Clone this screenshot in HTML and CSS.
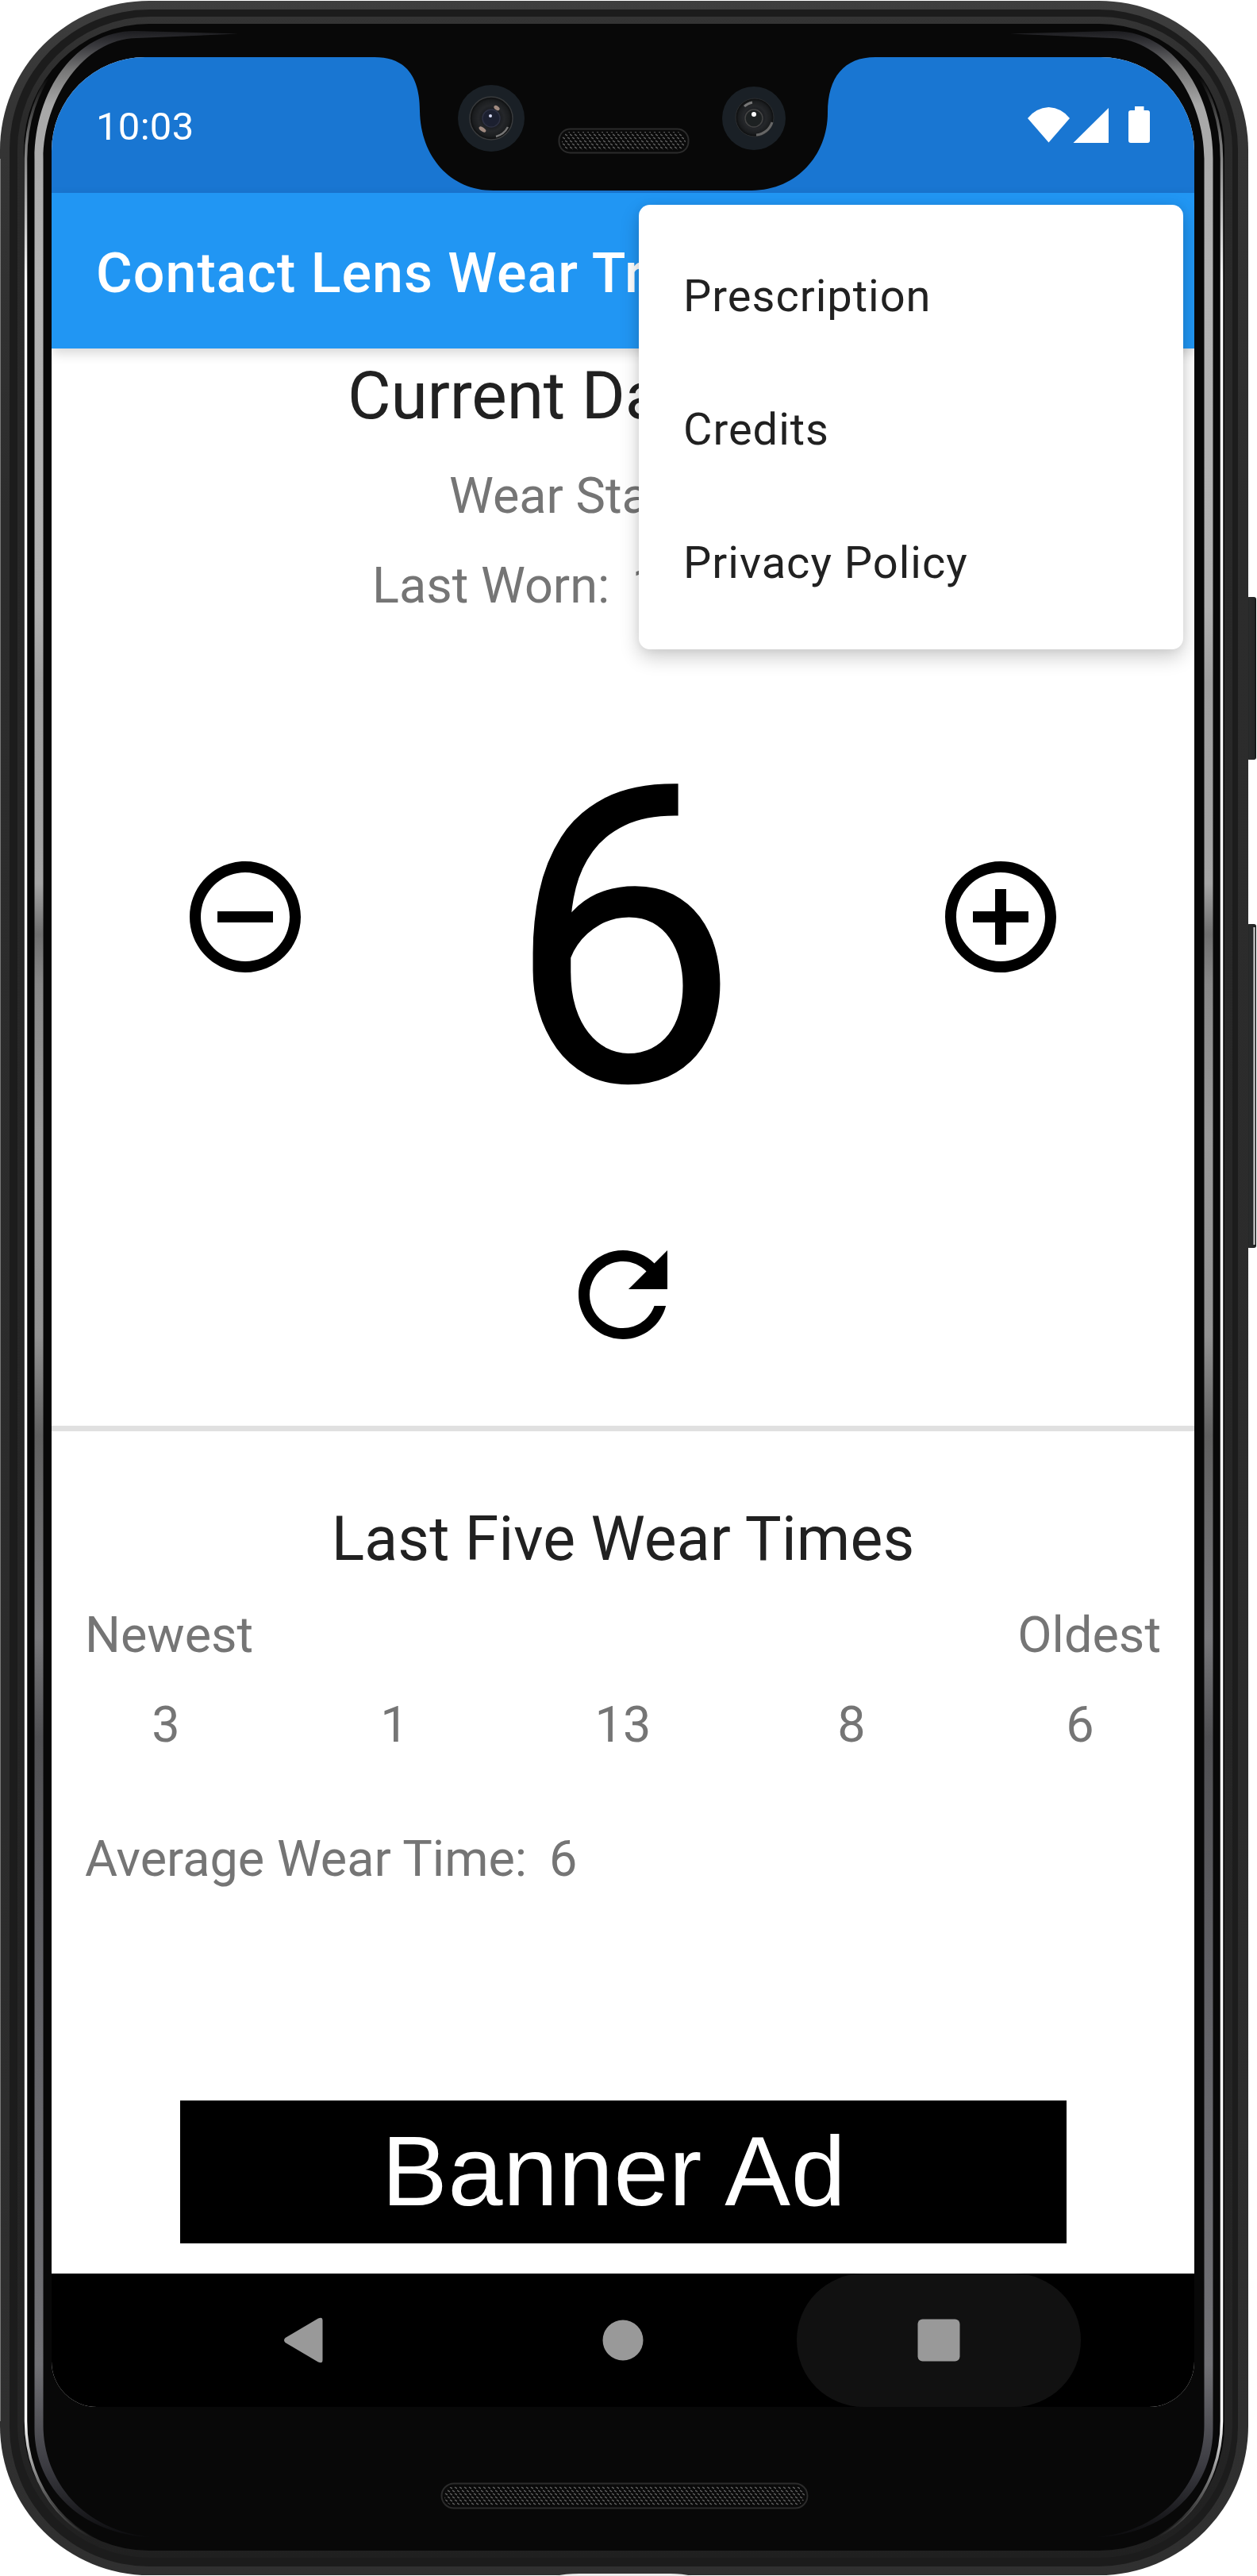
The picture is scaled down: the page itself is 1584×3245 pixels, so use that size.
FILE: index.html
```
<!DOCTYPE html>
<html lang="en">
<head>
<meta charset="utf-8">
<title>Contact Lens Wear Tracker</title>
<link rel="stylesheet" href="styles.css">
</head>
<body>
<div class="phone">
  <svg class="phone-body" viewBox="0 0 1584 3245" aria-hidden="true">
    <defs>
      <linearGradient id="shell" x1="0" y1="0" x2="0" y2="1">
        <stop offset="0" stop-color="#3e3e3e"/><stop offset=".04" stop-color="#353535"/>
        <stop offset=".2" stop-color="#2c2c2c"/><stop offset=".7" stop-color="#2b2b2b"/><stop offset="1" stop-color="#303030"/>
      </linearGradient>
      <linearGradient id="rim" x1="0" y1="0" x2="0" y2="1">
        <stop offset="0" stop-color="#343434"/><stop offset=".04" stop-color="#2a2a2a"/>
        <stop offset=".95" stop-color="#242424"/><stop offset="1" stop-color="#202020"/>
      </linearGradient>
      <linearGradient id="edge" gradientUnits="userSpaceOnUse" x1="0" y1="0" x2="0" y2="3245">
        <stop offset=".03" stop-color="#fff" stop-opacity="0"/><stop offset=".055" stop-color="#fff" stop-opacity=".45"/>
        <stop offset=".11" stop-color="#fff"/><stop offset=".94" stop-color="#fff"/>
        <stop offset=".965" stop-color="#fff" stop-opacity=".4"/><stop offset=".985" stop-color="#fff" stop-opacity="0"/>
      </linearGradient>
      <linearGradient id="glass" gradientUnits="userSpaceOnUse" x1="0" y1="38" x2="0" y2="3200">
        <stop offset="0" stop-color="#1b1b1e"/><stop offset=".006" stop-color="#38383c"/><stop offset=".016" stop-color="#777"/>
        <stop offset=".03" stop-color="#a8a8a8"/><stop offset=".1" stop-color="#b2b2b2"/><stop offset=".23" stop-color="#b0b0b0"/>
        <stop offset=".26" stop-color="#9f9f9f"/><stop offset=".34" stop-color="#a4a4a4"/><stop offset=".36" stop-color="#707070"/>
        <stop offset=".38" stop-color="#888"/><stop offset=".44" stop-color="#999"/><stop offset=".52" stop-color="#929292"/>
        <stop offset=".56" stop-color="#606060"/><stop offset=".64" stop-color="#77777a"/><stop offset=".68" stop-color="#505053"/>
        <stop offset=".8" stop-color="#646469"/><stop offset=".93" stop-color="#717175"/><stop offset=".97" stop-color="#3c3c42"/>
        <stop offset="1" stop-color="#0a0a0c"/>
      </linearGradient>
      <linearGradient id="button" x1="0" y1="0" x2="1" y2="0">
        <stop offset="0" stop-color="#111"/><stop offset=".25" stop-color="#2a2c2c"/><stop offset=".8" stop-color="#252828"/><stop offset="1" stop-color="#111"/>
      </linearGradient>
      <radialGradient id="lens" cx=".5" cy=".5" r=".5">
        <stop offset="0" stop-color="#23252f"/><stop offset=".3" stop-color="#15171c"/><stop offset=".6" stop-color="#25272a"/>
        <stop offset=".85" stop-color="#1b1d1f"/><stop offset="1" stop-color="#0b0c0d"/>
      </radialGradient>
      <pattern id="mesh" width="6" height="8" patternUnits="userSpaceOnUse">
        <path d="M0 1 L3 3 M3 5 L6 7" stroke="#606060" stroke-width="1.500"/>
      </pattern>
    </defs>
    <rect x="1571" y="752" width="12" height="205" rx="3" fill="url(#button)"/>
    <rect x="1571" y="1164" width="12" height="408" rx="3" fill="url(#button)"/>
    <path d="M1580.500 1168V1568" stroke="#d8d8d8" stroke-width="2"/>
    <rect x="0" y="1" width="1573" height="3243" rx="188" fill="url(#shell)"/>
    <path d="M.5 200V3050" stroke="#777"/>
    <rect x="12" y="12" width="1548" height="3221" rx="176" fill="#1c1c1c"/>
    <rect x="22" y="21" width="1531" height="3201" rx="168" fill="url(#rim)"/>
    <rect x="30" y="30" width="1513" height="3183" rx="158" fill="#080808"/>
    <path d="M170 32C88 34 32.500 110 32.500 200V3050C32.500 3135 90 3210 178 3211M1403 32C1485 34 1539.500 110 1539.500 200V3050C1539.500 3135 1483 3210 1395 3211" fill="none" stroke="url(#edge)" stroke-width="3.500"/>
    <path d="M300 42.500L170 39C95 39 43.500 115 43.500 200V3060C43.500 3135 105 3193 190 3196C105 3188 54.500 3125 54.500 3055V200C54.500 125 105 49 172 48ZM1273 42.500L1403 39C1478 39 1528.500 115 1528.500 200V3060C1528.500 3135 1468 3193 1383 3196C1468 3188 1517.500 3125 1517.500 3055V200C1517.500 125 1468 49 1401 48Z" fill="url(#glass)"/>
    <rect x="556.500" y="3128.500" width="461" height="31" rx="15.500" fill="#0a0a0a" stroke="#2b2b2b" stroke-width="2"/>
    <rect x="560" y="3132" width="454" height="24" rx="12" fill="url(#mesh)"/>
    <path d="M700 3245Q712 3242 730 3242H845Q860 3242 872 3245Z" fill="#eee"/>
  </svg>

  <main class="screen">
    <header class="status-bar">
      <span class="clock">10:03</span>
      <svg class="status-icons" viewBox="0 0 154 46" aria-label="Wi-Fi, signal, battery">
        <path d="M0 15Q10 2 26.500 1Q43 2 53 15L26.500 45.500Z"/>
        <path d="M57.500 46L102 2V46Z"/>
        <path d="M135 0H146.500V5H151Q154 5 154 8V43Q154 46 151 46H130Q127 46 127 43V8Q127 5 130 5H135Z"/>
      </svg>
    </header>
    <div class="app-bar"><h1 class="app-title">Contact Lens Wear Tr</h1></div>

    <section class="current">
      <h2 class="current-title">Current Da</h2>
      <p class="wear-start">Wear Sta</p>
      <p class="last-worn"><span>Last Worn:</span><span>1</span></p>
      <div class="counter">
        <svg class="icon" viewBox="0 0 24 24" aria-label="Remove"><path d="M7 11v2h10v-2H7zm5-9C6.480 2 2 6.480 2 12s4.480 10 10 10 10-4.480 10-10S17.520 2 12 2zm0 18c-4.410 0-8-3.590-8-8s3.590-8 8-8 8 3.590 8 8-3.590 8-8 8z"/></svg>
        <div class="count">6</div>
        <svg class="icon" viewBox="0 0 24 24" aria-label="Add"><path d="M13 7h-2v4H7v2h4v4h2v-4h4v-2h-4V7zm-1-5C6.480 2 2 6.480 2 12s4.480 10 10 10 10-4.480 10-10S17.520 2 12 2zm0 18c-4.410 0-8-3.590-8-8s3.590-8 8-8 8 3.590 8 8-3.590 8-8 8z"/></svg>
      </div>
      <svg class="icon refresh" viewBox="0 0 24 24" aria-label="Reset"><path d="M17.650 6.350C16.200 4.900 14.210 4 12 4c-4.420 0-7.990 3.580-7.990 8s3.570 8 7.990 8c3.730 0 6.840-2.550 7.730-6h-2.080c-.82 2.330-3.040 4-5.650 4-3.310 0-6-2.690-6-6s2.690-6 6-6c1.660 0 3.140.69 4.220 1.780L13 11h7V4l-2.350 2.350z"/></svg>
    </section>

    <section class="history">
      <h2 class="history-title">Last Five Wear Times</h2>
      <div class="range"><span>Newest</span><span>Oldest</span></div>
      <div class="times"><span>3</span><span>1</span><span>13</span><span>8</span><span>6</span></div>
      <p class="average"><span>Average Wear Time:</span><span>6</span></p>
    </section>

    <div class="banner"><span>Banner Ad</span></div>

    <nav class="nav-bar">
      <div class="nav-key"><svg class="nav-icon" viewBox="0 0 64 64"><path d="M4.500 29 46 4.500Q51.500 2 51.500 7V57Q51.500 62 46 59.500L4.500 35Q1.500 32 4.500 29Z"/></svg></div>
      <div class="nav-key"><svg class="nav-icon" viewBox="0 0 64 64"><circle cx="32" cy="32" r="25.500"/></svg></div>
      <div class="nav-key pressed"><svg class="nav-icon" viewBox="0 0 64 64"><rect x="5.500" y="5.500" width="53" height="53" rx="6"/></svg></div>
    </nav>

    <svg class="notch" viewBox="0 0 640 168" aria-hidden="true">
      <path d="M0 0C40 0 57 25 57 68C58 125 95 168 150 168H475C530 168 571 125 571 70C571 25 592 0 631 0Z" fill="#080808"/>
      <g>
        <circle cx="147" cy="77" r="42" fill="#1a2026"/>
        <circle cx="147" cy="77" r="27" fill="url(#lens)" stroke="#383a3c" stroke-width="1.500"/>
        <path d="M168 88A24 24 0 0 1 153 100" fill="none" stroke="#777" stroke-width="2.500"/>
        <circle cx="147" cy="77" r="11" fill="#1c2030" stroke="#2d3042" stroke-width="1.500"/>
        <ellipse cx="154" cy="64" rx="4" ry="2.500" fill="#a08a80" transform="rotate(35 154 64)"/>
        <ellipse cx="136" cy="91" rx="5" ry="2.500" fill="#a08a80" transform="rotate(35 136 91)"/>
        <circle cx="146" cy="74" r="2" fill="#d8dcf5"/>
      </g>
      <g>
        <circle cx="478" cy="77" r="40" fill="#1a2026"/>
        <circle cx="479" cy="76" r="24" fill="url(#lens)" stroke="#2c2e30"/>
        <path d="M501 82A23 23 0 0 1 481 98" fill="none" stroke="#666" stroke-width="3"/>
        <path d="M466 62A20 20 0 0 1 476 57" fill="none" stroke="#777" stroke-width="3"/>
        <circle cx="478" cy="77" r="11" fill="#1d2122" stroke="#444" stroke-width="1.500"/>
        <circle cx="478" cy="72" r="3" fill="#fff"/>
      </g>
      <rect x="232.500" y="90.500" width="163" height="30" rx="14" fill="#0a0a0a" stroke="#2b2b2b" stroke-width="2"/>
      <rect x="236" y="94" width="156" height="23" rx="11" fill="url(#mesh)"/>
    </svg>

    <ul class="menu">
      <li>Prescription</li>
      <li>Credits</li>
      <li>Privacy Policy</li>
    </ul>
  </main>
</div>
</body>
</html>
```
FILE: styles.css
```
* { box-sizing: border-box; margin: 0; padding: 0; }

body {
  background: #fff;
  font-family: Roboto, "Noto Sans", sans-serif;
  color: #757575;
}

h1, h2 { font-weight: 400; }

.phone {
  position: relative;
  width: 1584px;
  height: 3245px;
  padding: 72px 79px 0 65px;
  overflow: hidden;
}

.phone-body {
  position: absolute;
  inset: 0;
  width: 1584px;
  height: 3245px;
}

.screen {
  position: relative;
  display: flex;
  flex-direction: column;
  width: 1440px;
  height: 2960px;
  background: #fff;
  border-radius: 118px 118px 57px 57px;
  overflow: hidden;
}

/* Status bar and app bar */
.status-bar {
  display: flex;
  justify-content: space-between;
  height: 171px;
  padding: 62px 56px 0;
  background: #1976d2;
  color: #fff;
}

.clock {
  font-size: 49px;
  line-height: 52px;
  letter-spacing: .3px;
}

.status-icons {
  width: 154px;
  height: 46px;
  fill: #fff;
}

.app-bar {
  position: relative;
  height: 196px;
  padding: 6px 56px 0;
  background: #2196f3;
  color: #fff;
  box-shadow: 0 6px 14px rgba(0, 0, 0, .16);
}

.app-title {
  font-size: 70px;
  font-weight: 500;
  line-height: 190px;
  letter-spacing: 1px;
  white-space: nowrap;
}

/* Current wear counter */
.current {
  display: flex;
  flex-direction: column;
  height: 1364px;
  border-bottom: 7px solid #e0e0e0;
}

.current-title {
  margin-top: 11px;
  padding-left: 373px;
  font-size: 84px;
  line-height: 98px;
  letter-spacing: -.2px;
  color: #212121;
}

.wear-start, .last-worn, .range, .times, .average {
  font-size: 63px;
  line-height: 74px;
}

.wear-start { margin-top: 40px; padding-left: 501px; }

.last-worn {
  display: flex;
  gap: 28px;
  margin-top: 39px;
  padding-left: 404px;
}

.counter {
  display: flex;
  justify-content: space-between;
  margin-top: 117px;
  padding: 0 160px;
}

.icon {
  width: 168px;
  height: 168px;
  margin-top: 179px;
  fill: #000;
}

.count {
  padding: 27px 0 26px;
  font-size: 525px;
  line-height: 526px;
  color: #000;
}

.refresh {
  align-self: center;
  margin-top: 76px;
}

/* Previous wear times */
.history { padding: 91px 42px 0; }

.history-title {
  font-size: 77px;
  line-height: 90px;
  letter-spacing: .15px;
  text-align: center;
  color: #212121;
}

.range {
  display: flex;
  justify-content: space-between;
  margin-top: 39px;
}

.times {
  display: grid;
  grid-template-columns: repeat(5, 1fr);
  margin: 39px -42px 0;
  text-align: center;
}

.average {
  display: flex;
  gap: 28px;
  margin-top: 95px;
}

.banner {
  width: 1117px;
  height: 180px;
  margin: 267px 0 38px 162px;
  padding-left: 254px;
  background: #000;
  color: #fff;
  font: 124px/178px "Liberation Sans", Arial, sans-serif;
  letter-spacing: .7px;
}

/* System navigation */
.nav-bar {
  display: flex;
  justify-content: center;
  gap: 40px;
  height: 168px;
  background: #000;
}

.nav-key {
  display: flex;
  align-items: center;
  justify-content: center;
  width: 358px;
  border-radius: 84px;
}

.pressed { background: #111; }

.nav-icon {
  width: 64px;
  height: 64px;
  fill: #999;
}

/* Overlays */
.notch {
  position: absolute;
  top: 0;
  left: 407px;
  width: 640px;
  height: 168px;
}

.menu {
  position: absolute;
  top: 186px;
  left: 740px;
  width: 686px;
  height: 560px;
  padding: 28px 56px;
  list-style: none;
  background: #fff;
  border-radius: 14px;
  box-shadow: 0 10px 24px rgba(0, 0, 0, .2), 0 0 12px rgba(0, 0, 0, .06);
  color: #212121;
  font-size: 56px;
  letter-spacing: 1px;
}

.menu li {
  height: 168px;
  padding-top: 6px;
  line-height: 162px;
}
```
